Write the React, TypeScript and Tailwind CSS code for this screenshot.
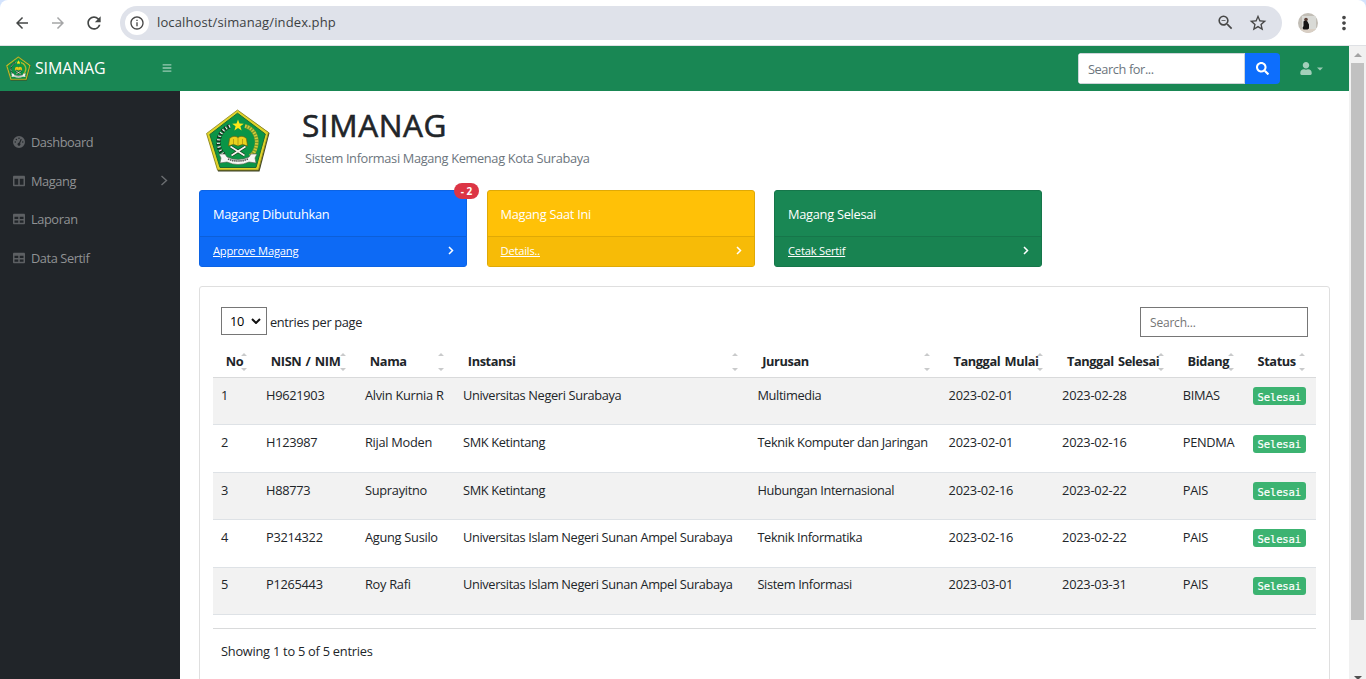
import React from "react";
import { FaBars, FaColumns, FaTable, FaUser, FaSearch } from "react-icons/fa";
import { FaGaugeHigh } from "react-icons/fa6";
import { MdArrowBack, MdArrowForward, MdRefresh, MdInfoOutline, MdZoomOut, MdStarBorder, MdMoreVert } from "react-icons/md";

const rows = [
  ["1", "H9621903", "Alvin Kurnia R", "Universitas Negeri Surabaya", "Multimedia", "2023-02-01", "2023-02-28", "BIMAS"],
  ["2", "H123987", "Rijal Moden", "SMK Ketintang", "Teknik Komputer dan Jaringan", "2023-02-01", "2023-02-16", "PENDMA"],
  ["3", "H88773", "Suprayitno", "SMK Ketintang", "Hubungan Internasional", "2023-02-16", "2023-02-22", "PAIS"],
  ["4", "P3214322", "Agung Susilo", "Universitas Islam Negeri Sunan Ampel Surabaya", "Teknik Informatika", "2023-02-16", "2023-02-22", "PAIS"],
  ["5", "P1265443", "Roy Rafi", "Universitas Islam Negeri Sunan Ampel Surabaya", "Sistem Informasi", "2023-03-01", "2023-03-31", "PAIS"],
];
const headers = ["No", "NISN / NIM", "Nama", "Instansi", "Jurusan", "Tanggal Mulai", "Tanggal Selesai", "Bidang", "Status"];
const columns = "grid grid-cols-[45px_99px_98px_294.4px_191.2px_113.5px_120.7px_70px_71.2px]";

function Emblem({ className }: { className: string }) {
  return (
    <svg className={className} viewBox="0 0 66 64">
      <path d="M33.5 2 64.5 24 54.5 62.5H13L2 25.5Z" fill="#3a4124" />
      <path d="M32.5 1 63.5 23.5 53.5 61H12.5L1.5 24.5Z" fill="#e0d32a" stroke="#8a8420" strokeWidth=".8" />
      <path d="M32.5 4.2 60.3 25 51 58.5H15L4.8 25.5Z" fill="#0a9547" stroke="#1c6a34" strokeWidth="1" />
      <path d="M25 17C16 21 12 29 14 38c1 4 3 6 5 8" fill="none" stroke="#12301c" strokeWidth="4.4" strokeDasharray="2.6 1" />
      <path d="M25 17C16 21 12 29 14 38c1 4 3 6 5 8" fill="none" stroke="#eef3ee" strokeWidth="3.2" strokeDasharray="1.1 2.5" />
      <path d="M40 17c11 3 14 15 10 24-1 3-3 5-5 6" fill="none" stroke="#7d9a2b" strokeWidth="4" />
      <path d="M40 17c11 3 14 15 10 24-1 3-3 5-5 6" fill="none" stroke="#d3cd3a" strokeWidth="3.2" strokeDasharray="1.4 1.4" />
      <path d="m33 10.5 1.5 4.1 4.3.1-3.4 2.6 1.2 4.1-3.6-2.4-3.6 2.4 1.2-4.1-3.4-2.6 4.3-.1Z" fill="#ffe719" />
      <path d="M24.5 29.5q4.5-4 8.5-1 4-3 8.5 1l1 7.5q-5-3-9.500 0-4.500-3-9.500 0Z" fill="#ebd31e" stroke="#665d0b" strokeWidth=".7" />
      <path d="M33 29v8M28.500 30v5M37.500 30v5" stroke="#a3890d" strokeWidth=".7" />
      <path d="m25.500 37.500 14 9M40.500 37.500l-14 9" stroke="#123a1b" strokeWidth="3.200" />
      <path d="m25.500 37.500 14 9M40.500 37.500l-14 9" stroke="#f5f5ef" strokeWidth="1.700" />
      <path d="m14 45 6 0 2 3q11 5 22 0l2-3 6 0-2 4 1 5-7-1q-11 5-22 0l-7 1 1-5Z" fill="#f7f7f5" stroke="#53604f" strokeWidth=".6" />
      <path d="M23 50q10 4 20 0" fill="none" stroke="#4c504a" strokeWidth="1.700" strokeDasharray="1.400 .700" />
    </svg>
  );
}

function BrowserBar() {
  return (
    <div className="h-[46px] shrink-0 bg-[#d3e3fd]">
      <div className="flex h-full items-center rounded-t-lg border-b border-[#dfe1e5] bg-white pl-[13px] text-[#474747]">
        <MdArrowBack className="mt-px size-[18px] text-[#444746]" />
        <MdArrowForward className="mt-px ml-[18px] size-[18px] text-[#a5a6a7]" />
        <MdRefresh className="ml-[17px] size-[20px] text-[#444746]" />
        <div className="ml-[16px] flex h-[34px] w-[1162px] items-center rounded-full bg-[#dfe2ea] pr-[14px] pl-[5px]">
          <div className="flex size-6 items-center justify-center rounded-full bg-white">
            <MdInfoOutline className="size-4" />
          </div>
          <span className="ml-2 text-[13px] tracking-[0.12px] text-[#3c3f43]">localhost/simanag/index.php</span>
          <div className="flex-1" />
          <MdZoomOut className="size-[19px]" />
          <MdStarBorder className="ml-[13px] size-5" />
        </div>
        <svg className="ml-4 size-5" viewBox="0 0 20 20">
          <defs><clipPath id="avatar"><circle cx="10" cy="10" r="10" /></clipPath></defs>
          <g clipPath="url(#avatar)">
            <rect width="20" height="20" fill="#c2beb6" />
            <rect x="4" y="3" width="14" height="13" fill="#d9dad6" />
            <path d="M0 16h20v4H0Z" fill="#d9cfc4" />
            <circle cx="8" cy="6.5" r="1.8" fill="#5c4038" />
            <path d="M5.500 8.500q2-2 4 0l1.500 3v4l-1.500 1H5.500l-1-1.500 1-2Z" fill="#151515" />
          </g>
        </svg>
        <MdMoreVert className="ml-[15px] size-[22px]" />
      </div>
    </div>
  );
}

function SummaryCard({ title, link, card, rule, footer, badge }: { title: string; link: string; card: string; rule: string; footer: string; badge?: string }) {
  return (
    <div className={`relative flex h-[77px] w-[268px] flex-col rounded-[3px] border text-white ${card}`}>
      <div className="flex h-[45px] items-center pt-[3px] pl-[13px] text-[12.8px] tracking-[-0.27px]">{title}</div>
      <div className={`flex flex-1 items-center justify-between border-t pr-[12px] pl-[13px] ${rule} ${footer}`}>
        <span className="text-[11.2px] tracking-[-0.22px] underline underline-offset-1">{link}</span>
        <svg className="mb-[2px] h-[9px] w-[6px]" viewBox="0 0 6 9"><path d="m1 1 3.5 3.5L1 8" fill="none" stroke="currentColor" strokeWidth="1.5" /></svg>
      </div>
      {badge && <span className="absolute -top-[8px] -right-[13px] flex h-4 w-[25px] items-center justify-center rounded-full bg-[#dc3545] text-[10px] font-bold">{badge}</span>}
    </div>
  );
}

function SideItem({ icon, label, arrow }: { icon: React.ReactNode; label: string; arrow?: boolean }) {
  return (
    <div className="flex h-[38.7px] items-center pr-3 pl-[13px]">
      <span className="flex w-[18px] pb-px text-[12px] text-[#5d6063]">{icon}</span>
      <span className="flex-1 text-[12.8px] tracking-[-0.42px] text-[#909294]">{label}</span>
      {arrow && (
        <svg className="mb-px h-[11px] w-[8px]" viewBox="0 0 8 11"><path d="M1.5 1 6.5 5.5 1.5 10" fill="none" stroke="#6b6e71" strokeWidth="1.4" /></svg>
      )}
    </div>
  );
}

function SortArrows() {
  return (
    <svg className="absolute top-[8px] right-[11px] h-[18px] w-[6px]" viewBox="0 0 6 18">
      <path d="M0 3 3 0 6 3ZM0 15H6L3 18Z" fill="#c9cacb" />
    </svg>
  );
}

export default function App() {
  return (
    <div className="flex h-[679px] w-[1366px] flex-col overflow-hidden bg-white font-['Open_Sans','Noto_Sans',sans-serif] text-[#212529]">
      <BrowserBar />
      <div className="flex min-h-0 flex-1">
        <div className="flex min-w-0 flex-1 flex-col">
          <header className="flex h-[45px] shrink-0 items-center bg-[#198754] text-white">
            <Emblem className="ml-[5px] h-[25px] w-[27px]" />
            <span className="ml-[3px] w-[127px] pb-px text-base tracking-[-0.15px]">SIMANAG</span>
            <FaBars className="mb-px size-[10px] text-white/55" />
            <div className="flex-1" />
            <div className="flex h-[31px] w-[202px] overflow-hidden rounded-[4px]">
              <div className="flex w-[167px] items-center border border-[#ced4da] bg-white pt-[2px] pl-[9px] text-[12.8px] tracking-[-0.42px] text-[#6c757d]">Search for...</div>
              <div className="flex flex-1 items-center justify-center bg-[#0d6efd]"><FaSearch className="size-[13px]" /></div>
            </div>
            <FaUser className="ml-[20px] h-[13px] w-[12px] text-white/60" />
            <svg className="mr-[26px] ml-[5px] h-1 w-[6px]" viewBox="0 0 6 4"><path d="M0 .5H6L3 3.5Z" fill="#9bcab4" /></svg>
          </header>
          <div className="flex min-h-0 flex-1">
            <aside className="w-[180px] shrink-0 bg-[#212529] pt-[32.2px]">
              <SideItem icon={<FaGaugeHigh />} label="Dashboard" />
              <SideItem icon={<FaColumns />} label="Magang" arrow />
              <SideItem icon={<FaTable />} label="Laporan" />
              <SideItem icon={<FaTable />} label="Data Sertif" />
            </aside>
            <main className="min-w-0 flex-1 pl-[19px]">
              <div className="flex h-[99px] pt-[18px]">
                <Emblem className="ml-[6px] h-[64px] w-[66px]" />
                <div className="ml-[31px]">
                  <h1 className="-mt-[4px] h-[39px] text-[31.5px] leading-[40px] font-medium tracking-[0.6px] [-webkit-text-stroke:0.6px_#212529]">SIMANAG</h1>
                  <p className="mt-[4px] ml-[3px] text-[12.8px] leading-[20px] tracking-[-0.34px] text-[#6c757d]">Sistem Informasi Magang Kemenag Kota Surabaya</p>
                </div>
              </div>
              <div className="flex gap-[19.5px]">
                <SummaryCard title="Magang Dibutuhkan" link="Approve Magang" badge="- 2" card="bg-[#0d6efd] border-[#0c63e4]" rule="border-[#0c5fd9]" footer="bg-[#0d6af5]" />
                <SummaryCard title="Magang Saat Ini" link="Details.." card="bg-[#ffc107] border-[#dfa906]" rule="border-[#dfa906]" footer="bg-[#f7bb07]" />
                <SummaryCard title="Magang Selesai" link="Cetak Sertif" card="bg-[#198754] border-[#16764a]" rule="border-[#16764a]" footer="bg-[#188351]" />
              </div>
              <section className="mt-[19px] h-[420px] w-[1131px] rounded-[3px] border border-[#dfdfdf] px-[13px] pt-[20px]">
                <div className="flex h-[30px] items-start pr-[8px] pl-[8px] text-[12.8px]">
                  <div className="flex h-[28px] w-[46px] items-center border border-[#767676] pt-px pl-[8px] tracking-[-0.3px] text-black">
                    10
                    <svg className="mb-px ml-[7px] h-[6px] w-[10px]" viewBox="0 0 10 6"><path d="m1 1 4 4 4-4" fill="none" stroke="#111" strokeWidth="2" /></svg>
                  </div>
                  <span className="ml-[3px] pt-[5px] leading-[20px] tracking-[-0.33px]">entries per page</span>
                  <div className="flex-1" />
                  <div className="flex h-[30px] w-[168px] items-center border border-[#767676] pt-px pl-[9px] text-[12px] tracking-[-0.2px] text-[#757575]">Search...</div>
                </div>
                <div className={`${columns} mt-[8px] h-[33px] border-b border-[#d9dadb]`}>
                  {headers.map((h) => (
                    <div key={h} className="relative pt-[6px] pl-[12.8px] text-[12.8px] leading-[20px] font-bold tracking-[-0.4px] whitespace-nowrap [word-spacing:1.4px]">
                      {h}
                      <SortArrows />
                    </div>
                  ))}
                </div>
                <div>
                  {rows.map((r) => (
                    <div key={r[0]} className={`${columns} h-[47.4px] border-b border-[#dee2e6] pt-[6.8px] text-[12.8px] leading-[20px] tracking-[-0.36px] whitespace-nowrap odd:bg-[#f2f2f2] even:bg-white`}>
                      {r.map((c, i) => (<div key={i} className={i === 0 || i === 5 || i === 6 ? "pl-[8px] tracking-[-0.22px]" : i === 1 || i === 2 || i === 7 ? "pl-[8px] tracking-[-0.28px]" : "pl-[8px]"}>{c}</div>))}
                      <div className="pt-[2.5px] pl-[8px]">
                        <div className="flex h-[18px] w-[53px] items-center justify-center rounded-[3px] bg-[#3cb371] pt-px font-['DejaVu_Sans_Mono',monospace] text-[10.5px] tracking-[-0.1px] text-white [-webkit-text-stroke:0.2px_#fff]">Selesai</div>
                      </div>
                    </div>
                  ))}
                </div>
                <div className="mt-[13px] border-t border-[#d9dadb] pt-[12px] pl-[8px] text-[12.8px] leading-[20px] tracking-[-0.24px]">Showing 1 to 5 of 5 entries</div>
              </section>
            </main>
          </div>
        </div>
        <div className="flex w-[17px] shrink-0 flex-col items-center bg-[#f1f1f1]">
          <svg className="h-[17px] w-[17px] shrink-0" viewBox="0 0 17 17"><path d="M5 11h8L9 7Z" fill="#a3a3a3" /></svg>
          <div className="h-[557px] w-[13px] bg-[#c1c1c1]" />
          <div className="flex-1" />
          <svg className="h-[3px] w-[17px] shrink-0" viewBox="0 0 17 3"><path d="M5 0h8l-3 3H8Z" fill="#505050" /></svg>
        </div>
      </div>
    </div>
  );
}
